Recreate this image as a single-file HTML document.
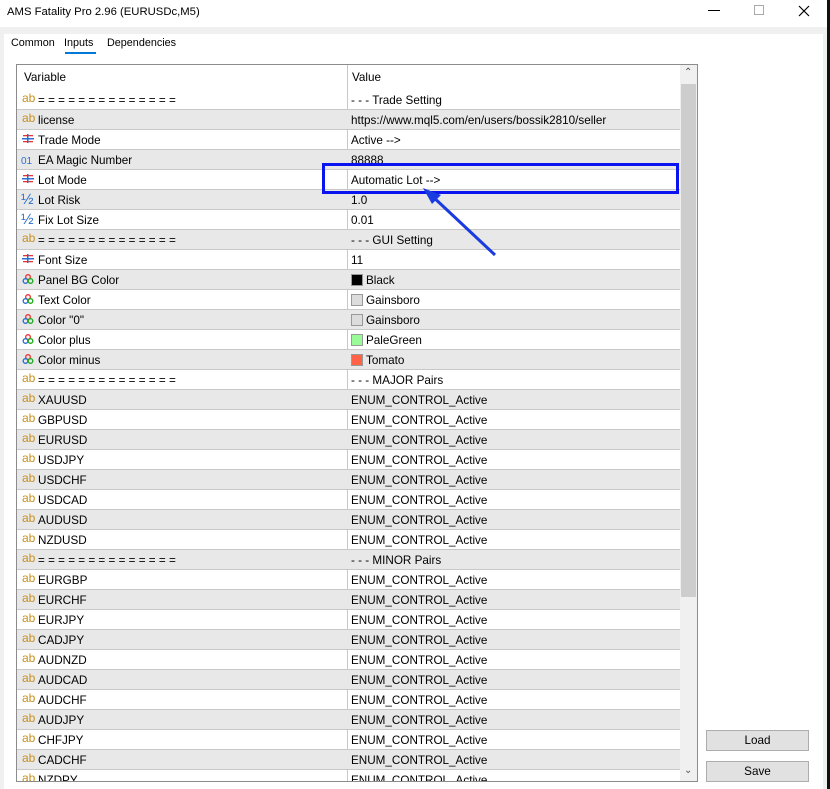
<!DOCTYPE html>
<html><head><meta charset="utf-8"><style>
*{margin:0;padding:0;box-sizing:border-box}
body{width:830px;height:789px;overflow:hidden;background:#fff;font-family:"Liberation Sans",Tahoma,sans-serif;font-size:11.7px;color:#000;position:relative}
.abs{position:absolute}
#title{left:7px;top:6px;font-size:11.3px}
#strip{left:0;top:27px;width:827px;height:7px;background:#f0f0f0}
#lstrip{left:0;top:27px;width:4px;height:762px;background:#f0f0f0}
#rstrip{left:823px;top:27px;width:4px;height:762px;background:#f0f0f0}
#rblack{left:827px;top:0;width:3px;height:789px;background:#111}
.tab{top:37px;font-size:10.8px}
#tbl{left:16px;top:64px;width:682px;height:718px;border:1px solid #8c8c8c;overflow:hidden;background:#fff}
.row{position:absolute;left:0;width:663px;height:20px;border-bottom:1px solid #c8c8c8;line-height:21px}
.row.g{background:#e8e8e8}
.v{position:absolute;left:21px;top:0}
.val{position:absolute;left:334px;top:0}
.div{position:absolute;left:330px;top:0;width:1px;height:718px;background:#c8c8c8}
.ic{position:absolute;left:4px;top:0;width:14px;height:19px;font-size:11px}
.ab{color:#c8901c;font-size:12px;left:5px;top:-2px}
.sb{position:absolute;left:663px;top:0;width:17px;height:716px;background:#f0f0f0}
.th{position:absolute;left:1px;top:19px;width:15px;height:513px;background:#cdcdcd}
.sw{display:inline-block;width:12px;height:12px;vertical-align:-2px;margin-right:3px;border:1px solid #999}
.btn{left:706px;width:103px;height:21px;background:#e1e1e1;border:1px solid #adadad;text-align:center;line-height:20px}
</style></head><body>
<div class="abs" id="title">AMS Fatality Pro 2.96 (EURUSDc,M5)</div>
<div class="abs" style="left:708px;top:10px;width:12px;height:1px;background:#000"></div>
<div class="abs" style="left:754px;top:5px;width:10px;height:10px;border:1px solid #aaa"></div>
<svg class="abs" style="left:798px;top:5px" width="12" height="12"><path d="M1 1L11 11M11 1L1 11" stroke="#000" stroke-width="1.2"/></svg>
<div class="abs" id="strip"></div><div class="abs" id="lstrip"></div><div class="abs" id="rstrip"></div><div class="abs" id="rblack"></div>
<div class="abs tab" style="left:11px">Common</div>
<div class="abs tab" style="left:64px">Inputs</div>
<div class="abs" style="left:65px;top:52px;width:31px;height:2px;background:#0078d7"></div>
<div class="abs tab" style="left:107px">Dependencies</div>
<div class="abs" id="tbl">
<div class="row" style="top:0;height:25px;line-height:25px;border-bottom:none"><span class="v" style="left:7px">Variable</span><span class="val" style="left:335px">Value</span></div>
<div class="div"></div>
<div id="rows"></div>
<div class="sb"><div style="position:absolute;left:4px;top:2px;font-size:10px;color:#555">⌃</div><div class="th"></div><div style="position:absolute;left:4px;top:700px;font-size:10px;color:#555">⌄</div></div>
</div>
<div class="abs" style="left:322px;top:163px;width:357px;height:31px;border:3px solid #0a14f0"></div>
<svg class="abs" style="left:0;top:0" width="830" height="789"><line x1="495" y1="255" x2="430" y2="194" stroke="#1a3be0" stroke-width="3"/><polygon points="423,188 441,195 432,204" fill="#1a3be0"/></svg>
<div class="abs btn" style="top:730px">Load</div>
<div class="abs btn" style="top:761px">Save</div>
<script>
var E='<svg class="ic" viewBox="0 0 14 19"><rect x="2" y="5" width="10" height="1.3" fill="#e33"/><rect x="1" y="8" width="12" height="1.5" fill="#2a6fd0"/><rect x="2" y="11" width="10" height="1.3" fill="#e33"/><rect x="6" y="4" width="1.5" height="9" fill="#2a6fd0"/></svg>';
var AB='<span class="ic ab">ab</span>';
var N='<span class="ic" style="color:#2a6fd0;font-size:10px;top:1px">01</span>';
var H='<span class="ic" style="color:#2a6fd0;font-size:15px;top:-1px">½</span>';
var C='<svg class="ic" viewBox="0 0 14 19"><circle cx="7" cy="7" r="2.3" fill="none" stroke="#e33" stroke-width="1.4"/><circle cx="4.5" cy="11" r="2.3" fill="none" stroke="#2a6fd0" stroke-width="1.4"/><circle cx="9.5" cy="11" r="2.3" fill="none" stroke="#2a2" stroke-width="1.4"/></svg>';
var eq='= = = = = = = = = = = = = =';
var ec='ENUM_CONTROL_Active';
var R=[[AB,eq,'- - - Trade Setting'],[AB,'license','https://www.mql5.com/en/users/bossik2810/seller'],[E,'Trade Mode','Active -->'],[N,'EA Magic Number','88888'],[E,'Lot Mode','Automatic Lot -->'],[H,'Lot Risk','1.0'],[H,'Fix Lot Size','0.01'],[AB,eq,'- - - GUI Setting'],[E,'Font Size','11'],
[C,'Panel BG Color','<span class="sw" style="background:#000"></span>Black'],[C,'Text Color','<span class="sw" style="background:#dcdcdc"></span>Gainsboro'],[C,'Color "0"','<span class="sw" style="background:#dcdcdc"></span>Gainsboro'],[C,'Color plus','<span class="sw" style="background:#98fb98"></span>PaleGreen'],[C,'Color minus','<span class="sw" style="background:#ff6347"></span>Tomato'],[AB,eq,'- - - MAJOR Pairs']];
['XAUUSD','GBPUSD','EURUSD','USDJPY','USDCHF','USDCAD','AUDUSD','NZDUSD'].forEach(function(s){R.push([AB,s,ec])});
R.push([AB,eq,'- - - MINOR Pairs']);
['EURGBP','EURCHF','EURJPY','CADJPY','AUDNZD','AUDCAD','AUDCHF','AUDJPY','CHFJPY','CADCHF','NZDPY'].forEach(function(s){R.push([AB,s,ec])});
var h='';R.forEach(function(r,i){h+='<div class="row'+(i%2?' g':'')+'" style="top:'+(25+20*i)+'px">'+r[0]+'<span class="v">'+r[1]+'</span><span class="val">'+r[2]+'</span></div>'});
document.getElementById('rows').innerHTML=h;
</script>
</body></html>
